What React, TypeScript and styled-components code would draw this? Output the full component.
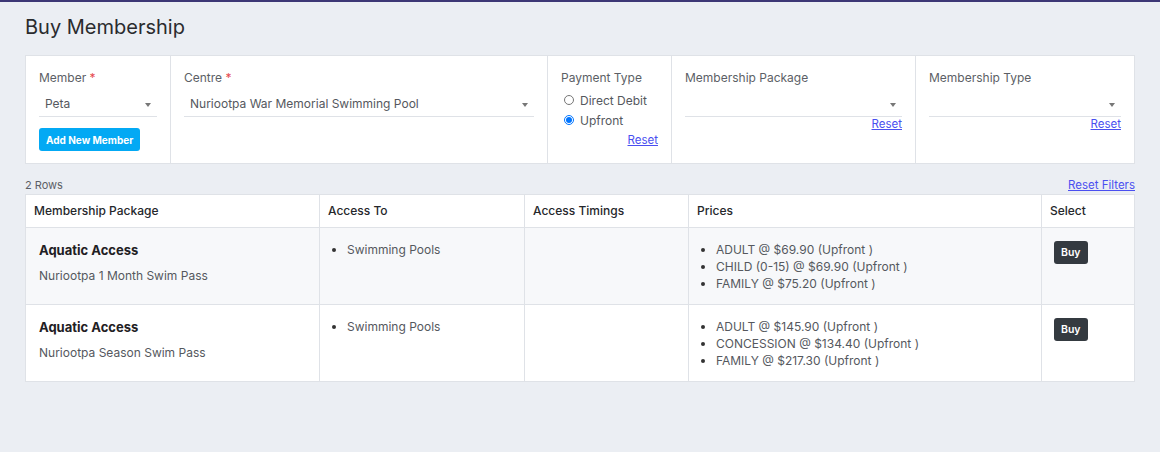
import React, { useState } from 'react';
import styled, { createGlobalStyle } from 'styled-components';

const GlobalStyle = createGlobalStyle`
  html, body {
    margin: 0;
    padding: 0;
    background-color: #ebeef3;
    font-family: Inter, "Noto Sans", Arial, sans-serif;
  }
`;

const colors = {
  border: '#dfe2e7',
  label: '#5c5f66',
  text: '#55585e',
  dark: '#1f2023',
  link: '#4a4ff0',
  sky: '#03a9f4',
  btnDark: '#343a40',
};

const Page = styled.main`
  min-height: 452px;
  box-sizing: border-box;
  border-top: 2px solid #3c3775;
  padding: 13px 25px 20px;
`;

const Title = styled.h1`
  margin: 0 0 16px;
  font-size: 20px;
  line-height: 24px;
  font-weight: 400;
  color: #2a2b2e;
`;

const FilterCard = styled.section`
  display: grid;
  grid-template-columns: 144px 377px 124px 244px 1fr;
  background-color: #fff;
  border: 1px solid ${colors.border};
  height: 109px;
  box-sizing: border-box;
`;

const FilterCell = styled.div`
  display: flex;
  flex-direction: column;
  padding: 14px 13px 0;
  border-left: 1px solid ${colors.border};
  &:first-child {
    border-left: none;
  }
`;

const Label = styled.label`
  font-size: 12px;
  line-height: 16px;
  color: ${colors.label};
  span {
    color: #e5484d;
  }
`;

const Select = styled.div`
  position: relative;
  margin-top: 6px;
  height: 24px;
  line-height: 24px;
  font-size: 12px;
  color: ${colors.text};
  padding-left: 6px;
  border-bottom: 1px solid ${colors.border};
  &::after {
    content: '';
    position: absolute;
    right: 6px;
    top: 11px;
    border-left: 3.5px solid transparent;
    border-right: 3.5px solid transparent;
    border-top: 4px solid #777;
  }
`;

const AddButton = styled.button`
  align-self: flex-start;
  margin-top: 11px;
  height: 23px;
  padding: 0 7px;
  border: none;
  border-radius: 3px;
  background-color: ${colors.sky};
  color: #fff;
  font-family: inherit;
  font-size: 10px;
  font-weight: 700;
  cursor: pointer;
`;

const RadioGroup = styled.div`
  display: flex;
  flex-direction: column;
  margin-top: 4px;
`;

const RadioRow = styled.label`
  display: flex;
  align-items: center;
  gap: 6px;
  height: 20px;
  font-size: 12px;
  color: ${colors.text};
  input {
    margin: 0 0 0 3px;
    width: 10px;
    height: 10px;
  }
`;

const ResetLink = styled.a<{ $gap?: number }>`
  align-self: flex-end;
  margin-top: ${(p) => p.$gap ?? -1}px;
  font-size: 11.5px;
  line-height: 16px;
  color: ${colors.link};
  text-decoration: underline;
  cursor: pointer;
`;

const MetaBar = styled.div`
  display: flex;
  justify-content: space-between;
  align-items: center;
  margin-top: 13px;
  height: 16px;
  font-size: 11px;
  color: ${colors.label};
  a {
    font-size: 11.5px;
    color: ${colors.link};
    text-decoration: underline;
    cursor: pointer;
  }
`;

const Table = styled.table`
  width: 100%;
  margin-top: 1px;
  border-collapse: collapse;
  background-color: #fff;
  table-layout: fixed;
  th, td {
    border: 1px solid ${colors.border};
    text-align: left;
    vertical-align: top;
  }
  th {
    padding: 8px;
    font-size: 12px;
    line-height: 16px;
    font-weight: 500;
    color: #25272b;
  }
`;

const Row = styled.tr<{ $striped?: boolean }>`
  background-color: ${(p) => (p.$striped ? '#f7f8fa' : '#fff')};
`;

const Cell = styled.td<{ $wide?: boolean }>`
  padding: 13px ${(p) => (p.$wide ? 13 : 9)}px 12px;
  font-size: 12px;
  line-height: 17px;
  color: ${colors.text};
`;

const PackageName = styled.div`
  font-size: 13px;
  line-height: 18px;
  font-weight: 700;
  color: ${colors.dark};
`;

const PackageSub = styled.div`
  margin-top: 8px;
  font-size: 12px;
  line-height: 17px;
  color: ${colors.text};
`;

const List = styled.ul`
  margin: 0;
  padding-left: 18px;
  li::marker {
    color: #333;
  }
`;

const BuyButton = styled.button`
  margin: 0 0 0 3px;
  height: 23px;
  padding: 0 7px;
  border: none;
  border-radius: 3px;
  background-color: ${colors.btnDark};
  color: #fff;
  font-family: inherit;
  font-size: 10.5px;
  font-weight: 600;
  cursor: pointer;
`;

type Membership = {
  name: string;
  pass: string;
  access: string[];
  prices: string[];
};

const memberships: Membership[] = [
  {
    name: 'Aquatic Access',
    pass: 'Nuriootpa 1 Month Swim Pass',
    access: ['Swimming Pools'],
    prices: ['ADULT @ $69.90 (Upfront )', 'CHILD (0-15) @ $69.90 (Upfront )', 'FAMILY @ $75.20 (Upfront )'],
  },
  {
    name: 'Aquatic Access',
    pass: 'Nuriootpa Season Swim Pass',
    access: ['Swimming Pools'],
    prices: ['ADULT @ $145.90 (Upfront )', 'CONCESSION @ $134.40 (Upfront )', 'FAMILY @ $217.30 (Upfront )'],
  },
];

const App: React.FC = () => {
  const [payment, setPayment] = useState<string>('upfront');

  return (
    <Page>
      <GlobalStyle />
      <Title>Buy Membership</Title>

      <FilterCard>
        <FilterCell>
          <Label>
            Member <span>*</span>
          </Label>
          <Select>Peta</Select>
          <AddButton>Add New Member</AddButton>
        </FilterCell>
        <FilterCell>
          <Label>
            Centre <span>*</span>
          </Label>
          <Select>Nuriootpa War Memorial Swimming Pool</Select>
        </FilterCell>
        <FilterCell>
          <Label>Payment Type</Label>
          <RadioGroup>
            <RadioRow>
              <input
                type="radio"
                name="payment"
                checked={payment === 'debit'}
                onChange={() => setPayment('debit')}
              />
              Direct Debit
            </RadioRow>
            <RadioRow>
              <input
                type="radio"
                name="payment"
                checked={payment === 'upfront'}
                onChange={() => setPayment('upfront')}
              />
              Upfront
            </RadioRow>
          </RadioGroup>
          <ResetLink $gap={2}>Reset</ResetLink>
        </FilterCell>
        <FilterCell>
          <Label>Membership Package</Label>
          <Select />
          <ResetLink>Reset</ResetLink>
        </FilterCell>
        <FilterCell>
          <Label>Membership Type</Label>
          <Select />
          <ResetLink>Reset</ResetLink>
        </FilterCell>
      </FilterCard>

      <MetaBar>
        <span>2 Rows</span>
        <a>Reset Filters</a>
      </MetaBar>

      <Table>
        <colgroup>
          <col style={{ width: 294 }} />
          <col style={{ width: 205 }} />
          <col style={{ width: 164 }} />
          <col style={{ width: 353 }} />
          <col />
        </colgroup>
        <thead>
          <tr>
            <th>Membership Package</th>
            <th>Access To</th>
            <th>Access Timings</th>
            <th>Prices</th>
            <th>Select</th>
          </tr>
        </thead>
        <tbody>
          {memberships.map((item, index) => (
            <Row key={index} $striped={index % 2 === 0}>
              <Cell $wide>
                <PackageName>{item.name}</PackageName>
                <PackageSub>{item.pass}</PackageSub>
              </Cell>
              <Cell>
                <List>
                  {item.access.map((a) => (
                    <li key={a}>{a}</li>
                  ))}
                </List>
              </Cell>
              <Cell />
              <Cell>
                <List>
                  {item.prices.map((p) => (
                    <li key={p}>{p}</li>
                  ))}
                </List>
              </Cell>
              <Cell>
                <BuyButton>Buy</BuyButton>
              </Cell>
            </Row>
          ))}
        </tbody>
      </Table>
    </Page>
  );
};

export default App;
